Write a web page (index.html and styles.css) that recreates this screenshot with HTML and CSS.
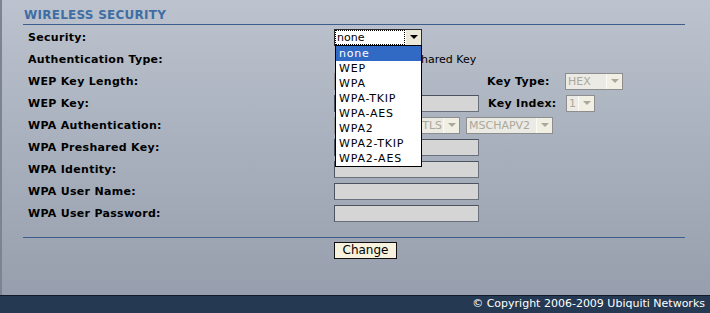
FILE: index.html
```html
<!DOCTYPE html>
<html>
<head>
<meta charset="utf-8">
<title>Wireless Security</title>
<link rel="stylesheet" href="styles.css">
</head>
<body>
<div class="page">
  <main class="content">
    <h2 class="title">WIRELESS SECURITY</h2>
    <div class="form">
      <div class="row">
        <span class="label">Security:</span>
        <div class="field">
          <div class="combo">
            <div class="select focus"><span class="val"><span class="focus-box">none</span></span><span class="btn"><i class="tri"></i></span></div>
            <ul class="menu">
              <li class="sel">none</li>
              <li>WEP</li>
              <li>WPA</li>
              <li>WPA-TKIP</li>
              <li>WPA-AES</li>
              <li>WPA2</li>
              <li>WPA2-TKIP</li>
              <li>WPA2-AES</li>
            </ul>
          </div>
        </div>
      </div>
      <div class="row">
        <span class="label">Authentication Type:</span>
        <div class="field">
          <span class="radio-gap"></span>
          <span class="radio-label">Shared Key</span>
        </div>
      </div>
      <div class="row">
        <span class="label">WEP Key Length:</span>
        <div class="field">
          <div class="select disabled w-len"><span class="val"></span><span class="btn"><i class="tri"></i></span></div>
          <span class="label side">Key Type:</span>
          <div class="select disabled w-hex"><span class="val">HEX</span><span class="btn"><i class="tri"></i></span></div>
        </div>
      </div>
      <div class="row">
        <span class="label">WEP Key:</span>
        <div class="field">
          <input class="text" type="text" disabled>
          <span class="label side">Key Index:</span>
          <div class="select disabled w-idx"><span class="val">1</span><span class="btn"><i class="tri"></i></span></div>
        </div>
      </div>
      <div class="row">
        <span class="label">WPA Authentication:</span>
        <div class="field">
          <div class="select disabled w-eap"><span class="val right">TTLS</span><span class="btn"><i class="tri"></i></span></div>
          <div class="select disabled w-ms"><span class="val">MSCHAPV2</span><span class="btn"><i class="tri"></i></span></div>
        </div>
      </div>
      <div class="row">
        <span class="label">WPA Preshared Key:</span>
        <div class="field"><input class="text" type="text" disabled></div>
      </div>
      <div class="row">
        <span class="label">WPA Identity:</span>
        <div class="field"><input class="text" type="text" disabled></div>
      </div>
      <div class="row">
        <span class="label">WPA User Name:</span>
        <div class="field"><input class="text" type="text" disabled></div>
      </div>
      <div class="row">
        <span class="label">WPA User Password:</span>
        <div class="field"><input class="text" type="password" disabled></div>
      </div>
    </div>
    <div class="actions">
      <button class="button" type="button">Change</button>
    </div>
  </main>
  <footer class="footer">© Copyright 2006-2009 Ubiquiti Networks</footer>
</div>
</body>
</html>
```

FILE: styles.css
```css
html, body {
  margin: 0;
  padding: 0;
}
body {
  width: 710px;
  height: 313px;
  overflow: hidden;
  font-family: "DejaVu Sans", Verdana, sans-serif;
  font-size: 11px;
  color: #000;
}
.page {
  height: 313px;
  display: flex;
  flex-direction: column;
  box-sizing: border-box;
  border-left: 2px solid #7c8493;
  background: linear-gradient(to bottom, #bcc3ce 0%, #a9b1be 45%, #959dac 100%);
}
.content {
  flex: 1;
  padding: 0 25px 0 21px;
}
.title {
  margin: 0;
  padding: 8px 0 1px 1px;
  font-size: 12px;
  font-weight: bold;
  line-height: 15px;
  letter-spacing: 0.25px;
  color: #3e6ea4;
  border-bottom: 1px solid #3b5e8d;
}
.form {
  padding: 1px 0 0 5px;
}
.row {
  display: flex;
  align-items: center;
  height: 22px;
}
.label {
  width: 306px;
  flex: none;
  font-weight: bold;
  font-size: 11px;
  letter-spacing: 0.3px;
}
.label.side {
  width: 78px;
  margin-left: 9px;
}
.field {
  display: flex;
  align-items: center;
}
.combo {
  position: relative;
}
.select {
  display: flex;
  box-sizing: border-box;
  height: 17px;
  border: 1px solid #7b7b7b;
  background: #fff;
  line-height: 15px;
}
.select .val {
  flex: 1;
  padding: 0 2px;
  white-space: nowrap;
  overflow: hidden;
}
.select .val.right {
  text-align: right;
}
.select .btn {
  width: 15px;
  flex: none;
  display: flex;
  align-items: center;
  justify-content: center;
  background: #ece9d8;
  border-left: 1px solid #fff;
}
.select .tri {
  width: 0;
  height: 0;
  border-left: 4px solid transparent;
  border-right: 4px solid transparent;
  border-top: 4px solid #000;
}
.select.focus {
  width: 88px;
  border-color: #2b2b2b;
}
.select.focus .val {
  padding: 1px 1px;
  display: flex;
}
.focus-box {
  flex: 1;
  outline: 1px dotted #000;
  line-height: 13px;
  padding-left: 1px;
}
.select.disabled {
  background: #ebeae4;
  color: #aca899;
  border-color: #8d8d8d;
}
.select.disabled .btn {
  background: #f1efe4;
  border-left: 1px solid #fbfaf5;
}
.select.disabled .tri {
  border-top-color: #aca899;
}
.w-len { width: 88px; margin-right: 56px; }
.w-hex { width: 58px; }
.w-idx { width: 29px; }
.w-eap { width: 126px; }
.w-eap .val { padding-right: 1px; }
.w-ms { width: 87px; margin-left: 6px; }
.menu {
  position: absolute;
  left: 1px;
  top: 16px;
  width: 87px;
  box-sizing: border-box;
  margin: 0;
  padding: 0;
  list-style: none;
  background: #fff;
  border: 1px solid #000;
  z-index: 2;
}
.menu li {
  height: 15px;
  line-height: 15px;
  padding-left: 3px;
  letter-spacing: 0.8px;
}
.menu li.sel {
  background: #316ac5;
  color: #fff;
}
.radio-gap {
  width: 80px;
}
.radio-label {
  white-space: nowrap;
}
.text {
  box-sizing: border-box;
  width: 145px;
  height: 17px;
  margin: 0;
  padding: 0 2px;
  background: #d5d5d5;
  border: 1px solid #6a707c;
  border-top-color: #4d535e;
  border-left-color: #4d535e;
  font: inherit;
}
.actions {
  margin-top: 13px;
  border-top: 1px solid #3b5e8d;
  padding: 4px 0 0 311px;
}
.button {
  box-sizing: border-box;
  width: 63px;
  height: 17px;
  margin: 0;
  padding: 0;
  background: #f6f2de;
  border: 1px solid #111;
  font-family: "DejaVu Sans", Verdana, sans-serif;
  font-size: 12px;
  line-height: 15px;
  color: #000;
}
.footer {
  height: 18px;
  box-sizing: border-box;
  margin-left: -2px;
  border-top: 1px solid #0f1a2a;
  background: #253953;
  color: #fff;
  font-size: 11px;
  line-height: 16px;
  text-align: right;
  padding-right: 5px;
}
```
